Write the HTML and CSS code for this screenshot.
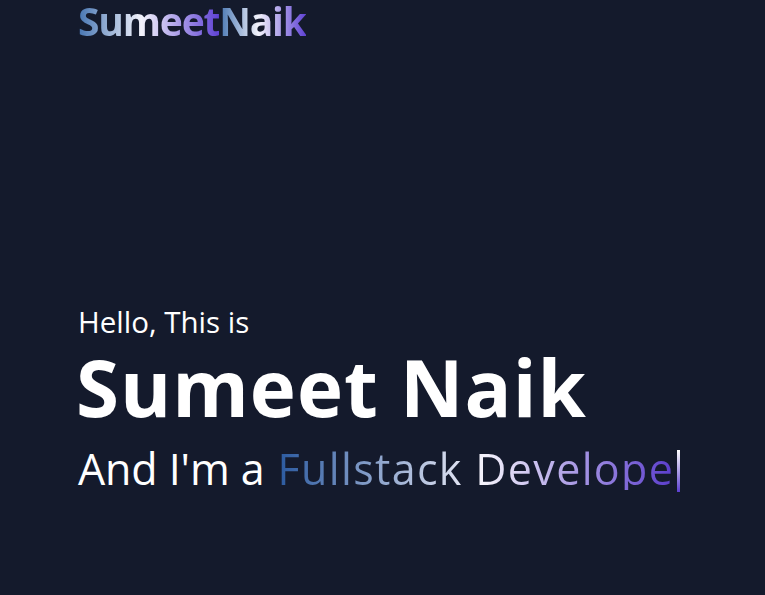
FILE: index.html
```html
<!DOCTYPE html>
<html lang="en">
<head>
<meta charset="utf-8">
<title>Sumeet Naik</title>
<link rel="stylesheet" href="styles.css">
</head>
<body>
<header class="nav">
  <a class="logo" href="#"><span class="grad">Sumeet</span><span class="grad">Naik</span></a>
</header>
<main class="hero">
  <p class="hello">Hello, This is</p>
  <h1 class="name">Sumeet Naik</h1>
  <p class="role"><span class="prefix">And I'm a</span><span class="typed grad-wide">Fullstack Develope</span><span class="cursor"></span></p>
</main>
</body>
</html>
```
FILE: styles.css
```css
html, body {
  margin: 0;
  padding: 0;
  height: 100%;
}
body {
  background: #141a2c;
  color: #ffffff;
  font-family: "Open Sans", "Noto Sans", sans-serif;
  overflow: hidden;
}
.nav {
  padding: 0 78px;
  height: 44px;
  display: flex;
  align-items: flex-start;
}
.logo {
  text-decoration: none;
  font-size: 39px;
  font-weight: 700;
  line-height: 1;
  letter-spacing: -1.2px;
  display: flex;
  padding-top: 1px;
}
.grad {
  background: linear-gradient(90deg, #4675b2 0%, #f2f2fb 45%, #5f42d4 100%);
  -webkit-background-clip: text;
  background-clip: text;
  color: transparent;
}
.hero {
  padding: 0 78px;
  margin-top: 263px;
  display: flex;
  flex-direction: column;
}
.hello {
  margin: 0;
  font-size: 29.5px;
  line-height: 1;
}
.name {
  margin: 11px 0 0 -2px;
  font-size: 78px;
  font-weight: 700;
  line-height: 1;
  letter-spacing: 1px;
}
.role {
  margin: 20px 0 0;
  font-size: 43px;
  line-height: 1;
  display: flex;
  align-items: center;
}
.prefix {
  letter-spacing: -0.1px;
}
.typed {
  margin-left: 13px;
  letter-spacing: 1.35px;
}
.grad-wide {
  background: linear-gradient(90deg, #2a599f 0%, #f4f2fb 52%, #5a3ccc 100%);
  -webkit-background-clip: text;
  background-clip: text;
  color: transparent;
}
.cursor {
  display: inline-block;
  width: 3px;
  height: 42px;
  margin-left: 3px;
  margin-top: 4px;
  background: linear-gradient(180deg, #ffffff 0%, #5b3fd0 100%);
}
```
